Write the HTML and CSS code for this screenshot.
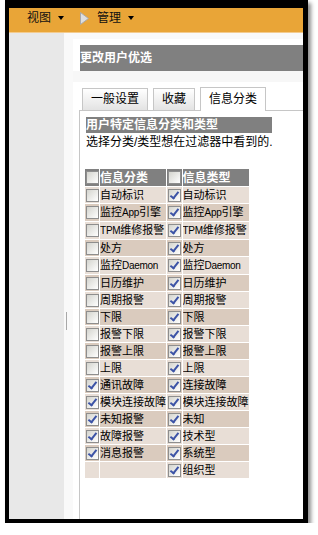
FILE: index.html
```html
<!DOCTYPE html>
<html lang="zh-CN">
<head>
    <meta charset="UTF-8">
    <title>更改用户优选</title>
    <link rel="stylesheet" href="styles.css">
</head>
<body>
    <div class="window">
        <div class="menubar">
            <span class="menu">视图<i class="arrow"></i></span>
            <span class="menu">
                <svg class="tri" width="9" height="13" viewBox="0 0 9 13"><polygon points="0.5,0.5 8.5,6.5 0.5,12.5" fill="#dedede" stroke="#a9a9a9"/></svg>
                管理<i class="arrow"></i>
            </span>
        </div>
        <div class="body">
            <div class="sidebar"></div>
            <div class="splitter"><div class="handle"></div></div>
            <div class="main">
                <div class="head"><div class="title">更改用户优选</div></div>
                <div class="tabs-area">
                    <div class="tabs">
                        <div class="tab">一般设置</div>
                        <div class="tab">收藏</div>
                        <div class="tab active">信息分类</div>
                    </div>
                    <div class="tab-body">
                        <div class="section">用户特定信息分类和类型</div>
                        <div class="hint">选择分类/类型想在过滤器中看到的.</div>
                        <table class="cats">
                            <thead>
                                <tr>
                                    <th class="cb"><span class="box"></span></th><th>信息分类</th>
                                    <th class="cb"><span class="box"></span></th><th>信息类型</th>
                                </tr>
                            </thead>
                            <tbody>
                                <tr><td class="cb"><span class="box"></span></td><td>自动标识</td><td class="cb"><span class="box on"></span></td><td>自动标识</td></tr>
                                <tr><td class="cb"><span class="box"></span></td><td>监控<span class="en">App</span>引擎</td><td class="cb"><span class="box on"></span></td><td>监控<span class="en">App</span>引擎</td></tr>
                                <tr><td class="cb"><span class="box"></span></td><td><span class="en">TPM</span>维修报警</td><td class="cb"><span class="box on"></span></td><td><span class="en">TPM</span>维修报警</td></tr>
                                <tr><td class="cb"><span class="box"></span></td><td>处方</td><td class="cb"><span class="box on"></span></td><td>处方</td></tr>
                                <tr><td class="cb"><span class="box"></span></td><td>监控<span class="en">Daemon</span></td><td class="cb"><span class="box on"></span></td><td>监控<span class="en">Daemon</span></td></tr>
                                <tr><td class="cb"><span class="box"></span></td><td>日历维护</td><td class="cb"><span class="box on"></span></td><td>日历维护</td></tr>
                                <tr><td class="cb"><span class="box"></span></td><td>周期报警</td><td class="cb"><span class="box on"></span></td><td>周期报警</td></tr>
                                <tr><td class="cb"><span class="box"></span></td><td>下限</td><td class="cb"><span class="box on"></span></td><td>下限</td></tr>
                                <tr><td class="cb"><span class="box"></span></td><td>报警下限</td><td class="cb"><span class="box on"></span></td><td>报警下限</td></tr>
                                <tr><td class="cb"><span class="box"></span></td><td>报警上限</td><td class="cb"><span class="box on"></span></td><td>报警上限</td></tr>
                                <tr><td class="cb"><span class="box"></span></td><td>上限</td><td class="cb"><span class="box on"></span></td><td>上限</td></tr>
                                <tr><td class="cb"><span class="box on"></span></td><td>通讯故障</td><td class="cb"><span class="box on"></span></td><td>连接故障</td></tr>
                                <tr><td class="cb"><span class="box on"></span></td><td>模块连接故障</td><td class="cb"><span class="box on"></span></td><td>模块连接故障</td></tr>
                                <tr><td class="cb"><span class="box on"></span></td><td>未知报警</td><td class="cb"><span class="box on"></span></td><td>未知</td></tr>
                                <tr><td class="cb"><span class="box on"></span></td><td>故障报警</td><td class="cb"><span class="box on"></span></td><td>技术型</td></tr>
                                <tr><td class="cb"><span class="box on"></span></td><td>消息报警</td><td class="cb"><span class="box on"></span></td><td>系统型</td></tr>
                                <tr><td class="cb"></td><td></td><td class="cb"><span class="box on"></span></td><td>组织型</td></tr>
                            </tbody>
                        </table>
                    </div>
                </div>
            </div>
        </div>
    </div>
</body>
</html>
```

FILE: styles.css
```css
body {
    margin: 0;
    background: #fff;
    font-family: 'Liberation Sans', 'Noto Sans CJK SC', sans-serif;
    font-size: 12px;
    color: #000;
}
.window {
    margin-left: 5px;
    width: 294px;
    height: 511px;
    border-style: solid;
    border-color: #000;
    border-width: 8px 5px 4px 4px;
    box-shadow: 3px 3px 4px rgba(0, 0, 0, 0.45);
    display: flex;
    flex-direction: column;
    background: #fff;
}
.menubar {
    height: 25px;
    box-sizing: border-box;
    background: #e9a537;
    border-bottom: 1px solid #f3cb8e;
    display: flex;
    align-items: flex-start;
    padding: 2px 0 0 18px;
    color: #111;
}
.menu {
    display: flex;
    align-items: center;
    height: 16px;
    line-height: 16px;
}
.menu + .menu {
    margin-left: 16px;
}
.arrow {
    width: 0;
    height: 0;
    margin-left: 7px;
    border-left: 3px solid transparent;
    border-right: 3px solid transparent;
    border-top: 4px solid #000;
}
.tri {
    margin-right: 8px;
}
.body {
    flex: 1;
    display: flex;
    background: #f9f9f9;
}
.sidebar {
    width: 55px;
    background: #e8e8e8;
}
.splitter {
    width: 9px;
}
.handle {
    width: 1px;
    height: 18px;
    margin: 279px 0 0 2px;
    background: #a8a8a8;
}
.main {
    flex: 1;
    margin-top: 6px;
    background: #fff;
    display: flex;
    flex-direction: column;
}
.head {
    padding: 6px 0 11px 7px;
    background: linear-gradient(to bottom, #fff 32px, #f7f7f7 32px);
}
.title {
    height: 26px;
    line-height: 26px;
    background: #808080;
    color: #fff;
    font-weight: bold;
}
.tabs-area {
    flex: 1;
    margin-left: 6px;
    padding-top: 5px;
    display: flex;
    flex-direction: column;
}
.tabs {
    display: flex;
    align-items: flex-end;
    gap: 5px;
    padding-left: 3px;
    margin-bottom: -1px;
    position: relative;
    z-index: 1;
}
.tab {
    height: 23px;
    line-height: 21px;
    box-sizing: border-box;
    padding: 0 8px;
    border: 1px solid #c6c6c6;
    background: linear-gradient(#fff, #e3e3e3);
}
.tab.active {
    height: 24px;
    line-height: 23px;
    border-bottom: none;
    background: #fff;
}
.tab-body {
    flex: 1;
    border-top: 1px solid #c6c6c6;
    border-left: 1px solid #c6c6c6;
    padding: 6px 0 0 6px;
    background: #fff;
}
.section {
    width: 186px;
    height: 16px;
    line-height: 16px;
    background: #808080;
    color: #fff;
    font-weight: bold;
}
.hint {
    line-height: 18px;
    margin-bottom: 17px;
}
.cats {
    border-collapse: separate;
    border-spacing: 1px;
    margin-left: -2px;
    table-layout: fixed;
    width: 166px;
}
.cats th,
.cats td {
    padding: 0;
    height: 16px;
    line-height: 16px;
    text-align: left;
    white-space: nowrap;
    overflow: hidden;
    font-size: 11px;
    font-weight: normal;
}
.cats th {
    height: 17px;
    background: #808080;
    color: #fff;
    font-size: 12px;
    font-weight: bold;
}
.cats th.cb,
.cats td.cb {
    width: 13px;
    padding-left: 1px;
}
.cats th:nth-child(2),
.cats td:nth-child(2) {
    width: 66px;
}
.cats th:nth-child(4),
.cats td:nth-child(4) {
    width: 66px;
}
.cats tbody tr:nth-child(odd) td {
    background: #e8ded6;
}
.cats tbody tr:nth-child(even) td {
    background: #dacbbe;
}
.en {
    font-size: 10px;
    letter-spacing: -0.3px;
}
.box {
    display: block;
    position: relative;
    width: 13px;
    height: 13px;
    box-sizing: border-box;
    border: 1px solid #8e8e8e;
    background: linear-gradient(135deg, #d4d4ce, #fff);
}
.box.on::after {
    content: "";
    position: absolute;
    left: 3px;
    top: 0px;
    width: 3px;
    height: 7px;
    border: solid #3c53a6;
    border-width: 0 2px 2px 0;
    transform: rotate(38deg);
}
```
